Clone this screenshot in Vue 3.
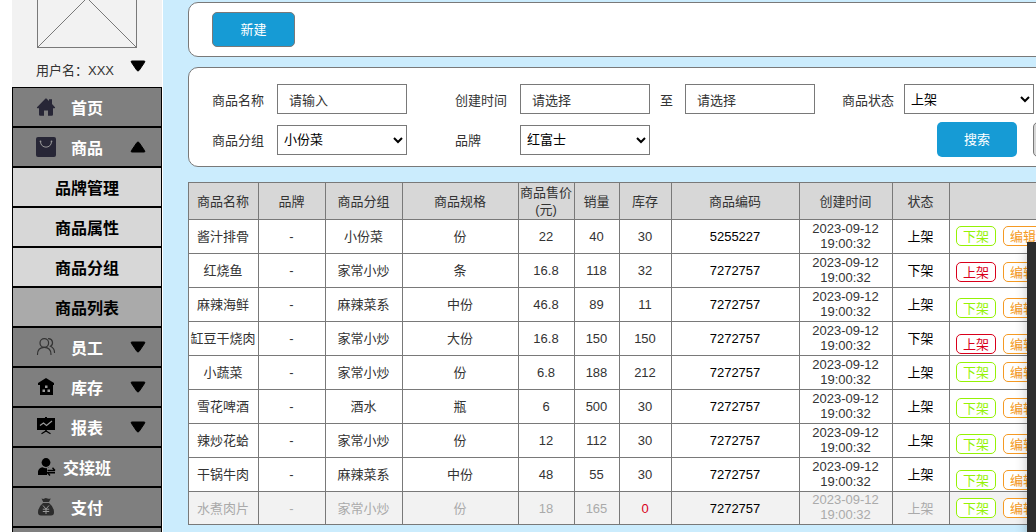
<script setup>
import { ref } from 'vue'

const menu = [
  { label: '首页', icon: 'home' },
  { label: '商品', icon: 'bag', arrow: 'up' },
  { label: '品牌管理', sub: true },
  { label: '商品属性', sub: true },
  { label: '商品分组', sub: true },
  { label: '商品列表', sub: true, active: true },
  { label: '员工', icon: 'users', arrow: 'down' },
  { label: '库存', icon: 'store', arrow: 'down' },
  { label: '报表', icon: 'chart', arrow: 'down' },
  { label: '交接班', icon: 'shift' },
  { label: '支付', icon: 'money' },
  { label: '', icon: '' }
]

const headers = ['商品名称', '品牌', '商品分组', '商品规格', '商品售价(元)', '销量', '库存', '商品编码', '创建时间', '状态', '']

const rows = [
  ['酱汁排骨', '小份菜', '份', '22', '40', '30', '5255227', '上架'],
  ['红烧鱼', '家常小炒', '条', '16.8', '118', '32', '7272757', '下架'],
  ['麻辣海鲜', '麻辣菜系', '中份', '46.8', '89', '11', '7272757', '上架'],
  ['缸豆干烧肉', '家常小炒', '大份', '16.8', '150', '150', '7272757', '下架'],
  ['小蔬菜', '家常小炒', '份', '6.8', '188', '212', '7272757', '上架'],
  ['雪花啤酒', '酒水', '瓶', '6', '500', '30', '7272757', '上架'],
  ['辣炒花蛤', '家常小炒', '份', '12', '112', '30', '7272757', '上架'],
  ['干锅牛肉', '麻辣菜系', '中份', '48', '55', '30', '7272757', '上架'],
  ['水煮肉片', '家常小炒', '份', '18', '165', '0', '7272757', '上架']
].map(([name, group, spec, price, sales, stock, code, status]) => ({ name, group, spec, price, sales, stock, code, status }))

const name = ref('')
const from = ref('')
const to = ref('')
</script>

<template>
  <div class="page">
    <aside class="sidebar">
      <div class="profile">
        <svg class="avatar" viewBox="0 0 100 100" fill="none" stroke="#797979">
          <rect x="0.5" y="0.5" width="99" height="99" />
          <path d="M0.5 0.5L99.5 99.5M99.5 0.5L0.5 99.5" />
        </svg>
        <div class="user">
          <span>用户名：XXX</span>
          <svg class="arrow" viewBox="0 0 16 12"><path d="M2 1h12q1.500 0 .6 1.300L9.200 10.300q-1.200 1.500-2.400 0L1.400 2.300Q.5 1 2 1z" stroke="#000" stroke-width="1" /></svg>
        </div>
      </div>
      <nav>
        <a v-for="(m, i) in menu" :key="i" href="#" class="item" :class="{ sub: m.sub, active: m.active }">
          <span>
            <svg v-if="m.icon === 'home'" class="icon" viewBox="0 0 20 20" fill="#272636">
              <path d="M1 10.200L9.300 1.700q.7-.7 1.400 0L13 4V2.200h3V7l3 3.200q.4 1-.7 1H17v6.300q0 1.300-1.300 1.300H12v-5.300H8v5.300H4.300Q3 18.800 3 17.500v-6.300H1.600q-1 0-.6-1z" />
            </svg>
            <svg v-else-if="m.icon === 'bag'" class="icon" viewBox="0 0 20 20">
              <rect width="20" height="20" rx="2" fill="#272636" />
              <path d="M4.500 4.500C4.500 12 15.500 12 15.500 4.500" fill="none" stroke="#999" />
              <circle cx="4.500" cy="4.300" r=".9" fill="#999" /><circle cx="15.500" cy="4.300" r=".9" fill="#999" />
            </svg>
            <svg v-else-if="m.icon === 'users'" class="icon" viewBox="0 0 20 20" fill="none" stroke="#333" stroke-width="1.200" stroke-linecap="round">
              <circle cx="8.300" cy="6" r="4.300" />
              <path d="M1.500 17.500C1.500 12.500 4.200 10.300 8.300 10.300S15 12.800 15 17.500M12.500 1.700c4.500 0 5.300 5.700 2 7.600 2.500 1.200 4 3.300 4 6.200" />
            </svg>
            <svg v-else-if="m.icon === 'store'" class="icon" viewBox="0 0 20 20">
              <path d="M10 1l8 5v2h-1v10H4V8H2V6z" />
              <path d="M9 8.500h2.500v2.500H9zM6.500 12.500H9V15H6.500zM11.500 12.500H14V15h-2.500z" fill="#999" />
            </svg>
            <svg v-else-if="m.icon === 'chart'" class="icon" viewBox="0 0 20 20">
              <path d="M1 1h8V0h2v1h8v12H1zM9.300 12h1.400v3H9.300z" />
              <path d="M4 8.500L7.500 6l3 2.500L16 4" fill="none" stroke="#999" stroke-width="1.200" />
              <path d="M5.500 16.700L10 14l4.500 2.700" fill="none" stroke="#000" stroke-width="1.300" />
            </svg>
            <svg v-else-if="m.icon === 'shift'" class="icon" viewBox="0 0 20 20">
              <circle cx="10" cy="5.500" r="4.400" />
              <path d="M2 18v-3.500Q2.500 11 6.500 10.200q3.500 2 6.500.3v7.500z" />
              <path d="M11 10.800h9v8h-9z" fill="#808080" />
              <path d="M11.500 13.500H19M16.500 10.800l2.500 2.700M19 15.800h-7.500l2.500 2.700" fill="none" stroke="#000" stroke-width="1.400" />
            </svg>
            <svg v-else-if="m.icon === 'money'" class="icon" viewBox="0 0 20 20" fill="#2b2b2b">
              <path d="M5.500 1.500q2 .8 3 0t3 0q1.500 .6 3.300-.1L13 5H7.200zM7 6h6q5.200 4 5 9.300 0 3.200-3 3.200H5q-3 0-3-3.200Q2 10 7 6z" />
              <path d="M7 8.500l3 3.500 3-3.500M10 12v5M6.800 12.200h6.400M6.800 14.500h6.400" fill="none" stroke="#999" />
            </svg>
          </span>
          <span class="name">{{ m.label }}</span>
          <span class="trail">
            <svg v-if="m.arrow" class="arrow" :class="m.arrow" viewBox="0 0 16 12"><path d="M2 1h12q1.500 0 .6 1.300L9.200 10.300q-1.200 1.500-2.400 0L1.400 2.300Q.5 1 2 1z" stroke="#000" stroke-width="1" /></svg>
          </span>
        </a>
      </nav>
    </aside>

    <main class="content">
      <section class="panel toolbar">
        <button type="button" class="btn outlined">新建</button>
      </section>

      <form class="panel filters" @submit.prevent>
        <div class="fields">
          <label for="name">商品名称</label>
          <input id="name" v-model="name" type="text" placeholder="请输入" />
          <label for="from" class="second">创建时间</label>
          <input id="from" v-model="from" type="text" placeholder="请选择" />
          <label for="to" class="between">至</label>
          <input id="to" v-model="to" type="text" placeholder="请选择" />
          <label for="status" class="third">商品状态</label>
          <select id="status"><option>上架</option><option>下架</option></select>

          <label for="group">商品分组</label>
          <select id="group"><option>小份菜</option><option>家常小炒</option></select>
          <label for="brand" class="second">品牌</label>
          <select id="brand"><option>红富士</option></select>
          <div class="actions">
            <button type="submit" class="btn">搜索</button>
            <button type="reset" class="btn plain" aria-label="重置"></button>
          </div>
        </div>
      </form>

      <table class="goods">
        <colgroup>
          <col v-for="n in 11" :key="n" :class="'c' + n" />
        </colgroup>
        <thead>
          <tr><th v-for="(h, i) in headers" :key="i" scope="col">{{ h }}</th></tr>
        </thead>
        <tbody>
          <tr v-for="r in rows" :key="r.name" :class="{ empty: r.stock === '0' }">
            <td>{{ r.name }}</td>
            <td>-</td>
            <td>{{ r.group }}</td>
            <td>{{ r.spec }}</td>
            <td>{{ r.price }}</td>
            <td>{{ r.sales }}</td>
            <td class="stock">{{ r.stock }}</td>
            <td class="strong code">{{ r.code }}</td>
            <td class="date">2023-09-12 19:00:32</td>
            <td class="strong">{{ r.status }}</td>
            <td class="ops">
              <div>
                <button v-if="r.status === '上架'" type="button" class="tag green">下架</button>
                <button v-else type="button" class="tag red">上架</button>
                <button type="button" class="tag orange">编辑</button>
              </div>
            </td>
          </tr>
        </tbody>
      </table>
    </main>
    <div class="drawer"></div>
  </div>
</template>

<style>
html,
body {
  overflow: hidden;
}
</style>

<style scoped>
.page {
  position: relative;
  display: flex;
  height: 100vh;
  overflow: hidden;
  padding-left: 12px;
  background: #fff;
  color: #333;
  font: 13px/18px "Liberation Sans", "Noto Sans CJK SC", sans-serif;
}
.page * {
  box-sizing: border-box;
}
button,
input,
select {
  font: inherit;
  margin: 0;
}
.sidebar {
  flex: 0 0 150px;
  margin-right: 1px;
}
.profile {
  display: flex;
  flex-direction: column;
  justify-content: flex-end;
  height: 87px;
  padding: 0 16px 7px 24px;
  background: #f2f2f2;
}
.avatar {
  flex: none;
  width: 100px;
  height: 100px;
  margin: 0 1px 12px;
}
.user {
  display: flex;
  justify-content: space-between;
  align-items: flex-start;
}
.user span {
  padding-top: 2px;
}
.arrow {
  display: block;
  width: 16px;
  height: 12px;
}
.arrow.up {
  transform: rotate(180deg);
}
.item {
  display: grid;
  grid-template-columns: 1fr auto 1fr;
  align-items: center;
  height: 40px;
  padding: 0 15px 0 23px;
  border: 1px solid #000;
  background: #7f7f7f;
  color: #fff;
  font-size: 16px;
  font-weight: 700;
  line-height: 24px;
  text-decoration: none;
}
.name {
  margin: 0 4px 0 -4px;
  padding-top: 3px;
}
.item.sub {
  background: #d7d7d7;
  color: #000;
}
.item.active {
  background: #aaa;
}
.trail {
  justify-self: end;
}
.icon {
  display: block;
  width: 20px;
  height: 20px;
}
.content {
  flex: 1 0 1200px;
  padding: 2px 25px 0;
  background: #cbecfd;
}
.panel {
  border: 1px solid #797979;
  border-radius: 10px;
  background: #fff;
}
.toolbar {
  margin-bottom: 10px;
  padding: 9px 23px;
}
.btn {
  display: block;
  width: 80px;
  height: 35px;
  padding: 0;
  border: 0;
  border-radius: 5px;
  background: #169bd5;
  color: #fff;
}
.btn.outlined {
  width: 83px;
  border: 1px solid #797979;
}
.btn.plain {
  border: 1px solid #797979;
  background: #d7d7d7;
}
.filters {
  margin-bottom: 15px;
  padding: 16px 23px 9px;
}
.fields {
  display: grid;
  grid-template-columns: 65px 130px 113px 130px 35px 130px 89px 130px;
  grid-template-rows: 30px 35px;
  row-gap: 8px;
  align-items: center;
}
label {
  padding-top: 3px;
}
.second {
  padding-left: 48px;
}
.between {
  padding-left: 10px;
}
.third {
  padding-left: 27px;
}
input,
select {
  width: 130px;
  height: 30px;
  border: 1px solid #797979;
  border-radius: 0;
  background: #fff;
  color: #000;
}
input {
  padding: 2px 11px 0;
}
input::placeholder {
  color: #333;
  opacity: 1;
}
select {
  padding: 0 2px;
}
.actions {
  grid-column: 7 / 9;
  display: flex;
  gap: 16px;
  margin-left: 122px;
}
.actions .btn {
  flex: none;
}
.goods {
  width: 100%;
  table-layout: fixed;
  border-collapse: separate;
  border-spacing: 0;
  border-left: 1px solid #797979;
  border-top: 1px solid #797979;
  text-align: center;
}
.c1 { width: 70px; }
.c2 { width: 67px; }
.c3 { width: 77px; }
.c4 { width: 116px; }
.c5 { width: 56px; }
.c6 { width: 45px; }
.c7 { width: 52px; }
.c8 { width: 128px; }
.c9 { width: 93px; }
.c10 { width: 57px; }
th,
td {
  padding: 0 1px 0 0;
  border-right: 1px solid #797979;
  border-bottom: 1px solid #797979;
}
th {
  height: 37px;
  background: #d7d7d7;
  font-weight: 400;
  line-height: 17px;
}
td {
  height: 34px;
  background: #fff;
  line-height: 15px;
}
.date {
  padding-bottom: 2px;
}
.strong {
  color: #000;
}
.empty td {
  height: 33px;
  background: #f2f2f2;
  color: #aaa;
}
.empty .stock {
  color: #d9001b;
}
.empty .code {
  color: #000;
}
.ops {
  vertical-align: top;
}
.ops div {
  display: flex;
  gap: 7px;
  padding: 6px 6px 0;
}
tr:nth-child(4n + 2) .ops div {
  padding-top: 8px;
}
tr:nth-child(4n + 3) .ops div {
  padding-top: 10px;
}
tr:nth-child(4n) .ops div {
  padding-top: 12px;
}
.tag {
  width: 40px;
  height: 20px;
  padding: 2px 0 0;
  border: 1px solid;
  border-radius: 5px;
  background: #fff;
  line-height: 16px;
}
.green {
  border-color: #95f204;
  color: #95f204;
}
.red {
  border-color: #d9001b;
  color: #d9001b;
}
.orange {
  border-color: #f59a23;
  color: #f59a23;
}
.drawer {
  position: absolute;
  top: 242px;
  right: 0;
  bottom: 0;
  width: 9px;
  background: #2d2d2d;
  box-shadow: 0 8px 12px rgba(0, 0, 0, 0.25);
}
</style>
